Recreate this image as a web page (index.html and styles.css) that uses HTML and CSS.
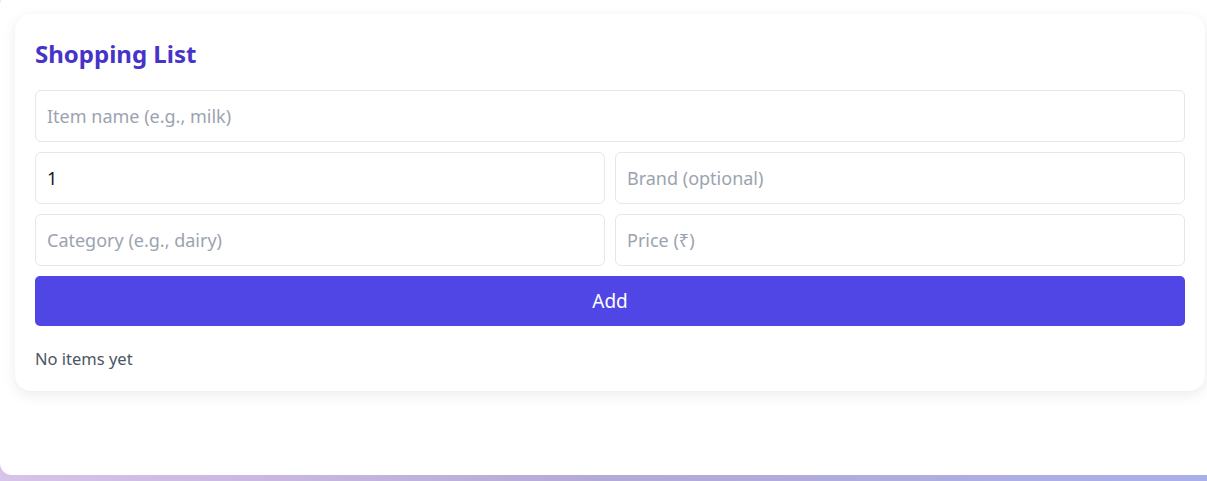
FILE: index.html
```html
<!DOCTYPE html>
<html lang="en">
<head>
<meta charset="utf-8">
<title>Shopping List</title>
<link rel="stylesheet" href="styles.css">
</head>
<body>
<div class="app">
  <section class="card">
    <h1 class="title">Shopping List</h1>
    <form class="form">
      <input class="field field-full" type="text" placeholder="Item name (e.g., milk)">
      <input class="field" type="number" value="1">
      <input class="field" type="text" placeholder="Brand (optional)">
      <input class="field" type="text" placeholder="Category (e.g., dairy)">
      <input class="field" type="text" placeholder="Price (₹)">
      <button class="add-btn" type="button">Add</button>
    </form>
    <p class="empty">No items yet</p>
  </section>
</div>
</body>
</html>
```

FILE: styles.css
```css
html, body {
  margin: 0;
  padding: 0;
}
body {
  height: 481px;
  overflow: hidden;
  background: linear-gradient(90deg, #d8c3ea 0%, #b4aad6 50%, #a9afe9 100%);
  font-family: "Noto Sans", "Open Sans", sans-serif;
}
.app {
  box-sizing: border-box;
  width: 1230px;
  height: 483px;
  margin-top: -8px;
  padding: 22px 15px 0;
  background: #ffffff;
  border-radius: 12px;
}
.card {
  box-sizing: border-box;
  width: 1190px;
  background: #ffffff;
  border-radius: 16px;
  box-shadow: 0 4px 14px rgba(0, 0, 0, 0.08), 0 0 2px rgba(0, 0, 0, 0.02);
  padding: 24px 20px 21px;
}
.title {
  margin: 0 0 20px;
  font-size: 24px;
  font-weight: 700;
  color: #4634c8;
  line-height: 32px;
}
.form {
  display: grid;
  grid-template-columns: 1fr 1fr;
  gap: 10px;
}
.field {
  box-sizing: border-box;
  height: 52px;
  padding: 0 11px;
  border: 1px solid #e5e7eb;
  border-radius: 6px;
  font-family: inherit;
  font-size: 18px;
  color: #111827;
  background: #fff;
  outline: none;
  -moz-appearance: textfield;
}
.field::-webkit-outer-spin-button,
.field::-webkit-inner-spin-button {
  -webkit-appearance: none;
  margin: 0;
}
.field::placeholder {
  color: #9ca3af;
}
.field-full {
  grid-column: 1 / -1;
}
.add-btn {
  grid-column: 1 / -1;
  height: 50px;
  border: none;
  border-radius: 5px;
  background: #5046e5;
  color: #ffffff;
  font-family: inherit;
  font-size: 19px;
}
.empty {
  margin: 22px 0 0;
  font-size: 16.5px;
  line-height: 22px;
  color: #4b5563;
}
```
